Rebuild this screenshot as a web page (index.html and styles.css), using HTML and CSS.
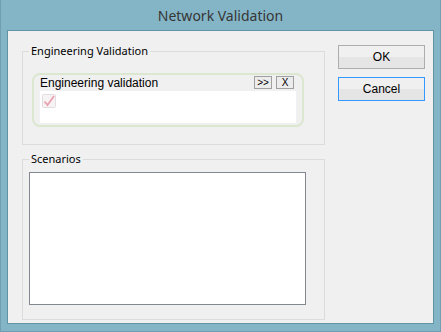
FILE: index.html
```html
<!DOCTYPE html>
<html lang="en">

<head>
    <meta charset="UTF-8">
    <meta name="viewport" content="width=device-width, initial-scale=1.0">
    <title>Network Validation</title>
    <link rel="stylesheet" href="styles.css">
</head>

<body>
    <div class="window">
        <div class="titlebar">Network Validation</div>

        <div class="client">
            <div class="left">
                <fieldset class="group group-eng">
                    <legend>Engineering Validation</legend>
                    <div class="panel">
                        <div class="panel-head">
                            <span>Engineering validation</span>
                            <div class="tools">
                                <button class="tool">&gt;&gt;</button>
                                <button class="tool">X</button>
                            </div>
                        </div>
                        <div class="panel-body">
                            <!-- faded check icon -->
                            <svg class="check" width="14" height="14" viewBox="0 0 14 14">
                                <rect x="0.5" y="0.5" width="13" height="13" rx="1" fill="#f6f3f4" stroke="#e4dde0" />
                                <path d="M2.5 7.5 L5.5 11 L12 2" fill="none" stroke="#eaa0ae" stroke-width="1.8" />
                            </svg>
                        </div>
                    </div>
                </fieldset>

                <fieldset class="group group-scen">
                    <legend>Scenarios</legend>
                    <div class="listbox"></div>
                </fieldset>
            </div>

            <div class="buttons">
                <button class="btn">OK</button>
                <button class="btn btn-default">Cancel</button>
            </div>
        </div>
    </div>
</body>

</html>
```

FILE: styles.css
```css
body {
    margin: 0;
    padding: 0;
    font-family: "Liberation Sans", Arial, sans-serif;
}

.window {
    width: 441px;
    height: 332px;
    box-sizing: border-box;
    background-color: #84b5c7;
    border: 1px solid #6f9fb0;
    border-top: none;
    padding: 0 6px 7px;
    display: flex;
    flex-direction: column;
}

.titlebar {
    height: 30px;
    line-height: 31px;
    text-align: center;
    font-family: "Noto Sans", sans-serif;
    font-size: 14px;
    color: #363636;
}

.client {
    flex: 1;
    display: flex;
    background-color: #f0f0f0;
    border: 1px solid #5f96a7;
    padding: 12px 0 0 14px;
}

.left {
    display: flex;
    flex-direction: column;
}

.group {
    width: 303px;
    box-sizing: border-box;
    margin: 0;
    padding: 0;
    border: 1px solid #dcdcdc;
}

.group legend {
    margin-left: 6px;
    padding: 0 2px;
    font-family: "Noto Sans", sans-serif;
    font-size: 11px;
    line-height: 16px;
    color: #000;
}

.group-eng {
    padding-bottom: 17px;
}

.group-scen {
    margin-top: 6px;
    padding-bottom: 14px;
}

.panel {
    width: 272px;
    height: 54px;
    box-sizing: border-box;
    margin: 14px 0 0 9px;
    border: 2px solid #dbe7d0;
    border-radius: 8px;
    padding: 0 6px 2px;
    display: flex;
    flex-direction: column;
}

.panel-head {
    height: 16px;
    display: flex;
    justify-content: space-between;
    align-items: center;
    font-size: 12px;
}

.tools {
    display: flex;
    gap: 4px;
    margin-right: 2px;
    align-self: flex-start;
    margin-top: 1px;
}

.tool {
    width: 18px;
    height: 13px;
    box-sizing: border-box;
    padding: 0;
    border: 1px solid #a0a0a0;
    background-color: #ececec;
    font-family: "Liberation Sans", Arial, sans-serif;
    font-size: 10px;
    line-height: 11px;
    color: #000;
}

.panel-body {
    flex: 1;
    background-color: #fff;
}

.check {
    display: block;
    margin: 3px 0 0 2px;
}

.listbox {
    width: 277px;
    height: 133px;
    box-sizing: border-box;
    margin: 5px 0 0 6px;
    border: 1px solid #828790;
    background-color: #fff;
}

.buttons {
    display: flex;
    flex-direction: column;
    gap: 8px;
    margin: 2px 0 0 13px;
}

.btn {
    width: 87px;
    height: 24px;
    box-sizing: border-box;
    border: 1px solid #adadad;
    background: linear-gradient(#f0f0f0 50%, #e5e5e5 50%);
    font-family: "Liberation Sans", Arial, sans-serif;
    font-size: 12px;
    color: #000;
    padding: 0;
}

.btn-default {
    border-color: #3399ff;
}
```
